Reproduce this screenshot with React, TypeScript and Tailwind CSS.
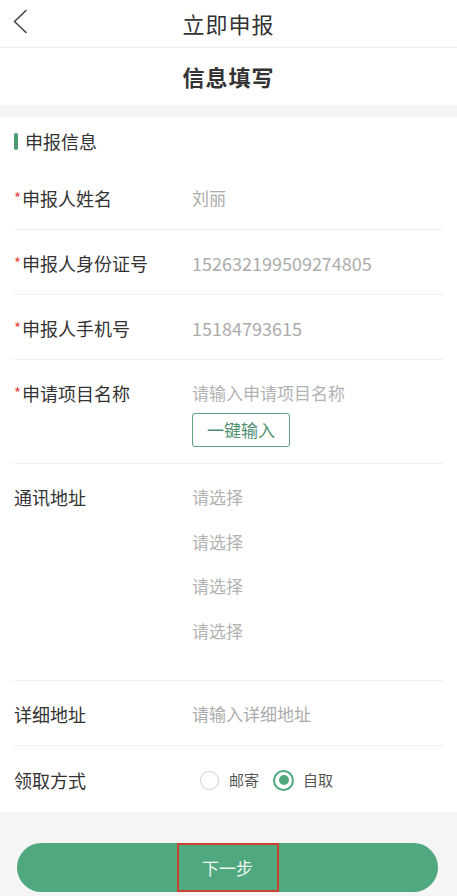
const font = { fontFamily: '"Noto Sans CJK SC", "Noto Sans", sans-serif' };

function Label({ text, required }: { text: string; required?: boolean }) {
  return (
    <div className="w-[178px] shrink-0 self-start flex items-center h-[26px] text-[18px] leading-[26px] text-[#333]">
      {required && <span className="text-[#e5483f] text-[15px] mr-[1px]">*</span>}
      {text}
    </div>
  );
}

function Row({
  label,
  required,
  value,
  numeric,
}: {
  label: string;
  required?: boolean;
  value: string;
  numeric?: boolean;
}) {
  return (
    <div className="flex items-start pt-[20px] h-[65px] border-b border-[#efefef]">
      <Label text={label} required={required} />
      <div className={`${numeric ? "text-[18px]" : "text-[17px]"} leading-[26px] text-[#acacac]`}>{value}</div>
    </div>
  );
}

export default function App() {
  return (
    <div className="w-[457px] h-[896px] bg-[#f5f5f5] flex flex-col" style={font}>
      {/* Header */}
      <div className="relative h-[48px] bg-white border-b border-[#eeeeee] flex items-center justify-center">
        <svg className="absolute left-[12px] top-[9px]" width="16" height="25" viewBox="0 0 16 25" fill="none">
          <path d="M14 1.5 L2.5 12.5 L14 23.5" stroke="#444" strokeWidth="1.6" strokeLinecap="round" strokeLinejoin="round" />
        </svg>
        <span className="text-[22px] text-[#333] tracking-[1px]">立即申报</span>
      </div>

      <div className="h-[57px] bg-white flex items-center justify-center">
        <span className="text-[22px] font-bold text-[#333] tracking-[1px]">信息填写</span>
      </div>

      <div className="h-[12px]" />

      {/* Form card */}
      <div className="bg-white px-[14px] h-[695px]">
        <div className="h-[48px] flex items-center gap-[7px]">
          <div className="w-[4px] h-[17px] rounded-[2px] bg-[#4a9a73]" />
          <span className="text-[18px] text-[#333]">申报信息</span>
        </div>

        <Row label="申报人姓名" required value="刘丽" />
        <Row label="申报人身份证号" required value="152632199509274805" numeric />
        <Row label="申报人手机号" required value="15184793615" numeric />

        <div className="flex h-[104px] pt-[20px] border-b border-[#efefef]">
          <Label text="申请项目名称" required />
          <div className="flex flex-col items-start">
            <div className="text-[17px] leading-[26px] text-[#b3b3b3]">请输入申请项目名称</div>
            <button className="mt-[7px] w-[98px] h-[34px] border border-[#5f9f82] rounded-[3px] text-[17px] text-[#4f8f71] flex items-center justify-center">
              一键输入
            </button>
          </div>
        </div>

        <div className="flex h-[217px] pt-[20px] border-b border-[#efefef]">
          <Label text="通讯地址" />
          <div className="flex flex-col gap-[18.5px]">
            {["请选择", "请选择", "请选择", "请选择"].map((t, i) => (
              <div key={i} className="text-[17px] leading-[26px] text-[#b3b3b3]">
                {t}
              </div>
            ))}
          </div>
        </div>

        <Row label="详细地址" value="请输入详细地址" />

        <div className="flex items-start pt-[21px] h-[66px]">
          <Label text="领取方式" />
          <div className="flex items-center h-[26px] ml-[8px]">
            <div className="w-[19px] h-[19px] rounded-full border border-[#cfcfcf]" />
            <span className="ml-[10px] text-[15px] text-[#555]">邮寄</span>
            <div className="ml-[14px] w-[21px] h-[21px] rounded-full border-[2px] border-[#4fa97e] flex items-center justify-center">
              <div className="w-[10px] h-[10px] rounded-full bg-[#4fa97e]" />
            </div>
            <span className="ml-[9px] text-[15px] text-[#555]">自取</span>
          </div>
        </div>
      </div>

      {/* Bottom button */}
      <div className="px-[17px] pt-[31px]">
        <button className="w-[421px] h-[49px] rounded-full bg-[#50a87e] flex items-center justify-center">
          <span className="w-[102px] h-[49px] border-[2px] border-[#c9452f] flex items-center justify-center text-[17px] text-[#eef7f2]">
            下一步
          </span>
        </button>
      </div>
    </div>
  );
}
